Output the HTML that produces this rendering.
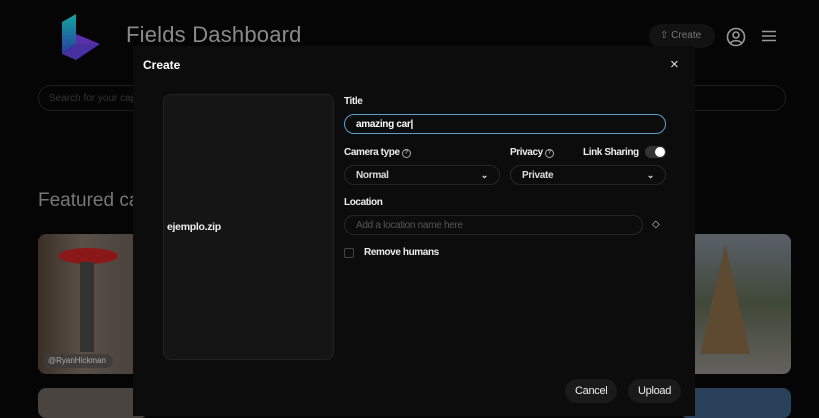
<!DOCTYPE html>
<html><head><style>
*{margin:0;padding:0;box-sizing:border-box}
body{width:819px;height:410px;overflow:hidden;background:#050505;font-family:"Liberation Sans",sans-serif;position:relative;color:#fff}
.a{position:absolute}
.title{left:126px;top:22px;font-size:22px;color:#8a8a8a;letter-spacing:0.2px}
.feat{left:38px;top:190px;font-size:19px;color:#777}
.search{left:38px;top:85px;width:748px;height:26px;border:1px solid #1c1c1c;border-radius:14px;font-size:10px;color:#333;padding:7px 10px}
.modal{left:133px;top:46px;width:562px;height:370px;background:#0c0c0c}
.lbl{font-size:10px;font-weight:bold;color:#eee;letter-spacing:-0.4px}
.inp{border:1px solid #262626;border-radius:11px;height:20px;font-size:10px;font-weight:bold;color:#ddd;padding:4px 11px;letter-spacing:-0.3px}
.btn{background:#1a1a1a;border-radius:12px;height:24px;font-size:11px;color:#eee;padding:6px 10px;letter-spacing:-0.3px}
.q{display:inline-block;width:9px;height:9px;border:1px solid #aaa;border-radius:50%;font-size:6px;text-align:center;line-height:7px;vertical-align:1px;margin-left:2px;font-weight:normal;letter-spacing:0}
</style></head><body>
<svg class="a" style="left:60px;top:14px" width="42" height="46" viewBox="0 0 42 46"><defs><linearGradient id="g" x1="0" y1="0" x2="0" y2="1"><stop offset="0" stop-color="#0fa8a0"/><stop offset="1" stop-color="#2a3aa0"/></linearGradient></defs><path d="M2 8 L16 0 L16 30 L2 40Z" fill="url(#g)"/><path d="M16 30 L28 34 L40 30 L16 20Z" fill="#5a2fa8"/><path d="M2 40 L16 30 L40 30 L16 46Z" fill="#4830a0"/></svg>
<div class="a title">Fields Dashboard</div>
<div class="a" style="left:649px;top:24px;width:66px;height:24px;border-radius:12px;background:#121212;font-size:10px;color:#777;padding:6px 0 0 11px">⇧ Create</div>
<svg class="a" style="left:726px;top:27px" width="20" height="20" viewBox="0 0 20 20" fill="none" stroke="#999" stroke-width="1.6"><circle cx="10" cy="10" r="8.5"/><circle cx="10" cy="8" r="3"/><path d="M4.5 16c2-3 9-3 11 0"/></svg>
<svg class="a" style="left:762px;top:30px" width="14" height="12" stroke="#999" stroke-width="1.5"><path d="M0 1.5h14M0 6h14M0 10.5h14"/></svg>
<div class="a search">Search for your captures</div>
<div class="a feat">Featured captures</div>
<div class="a" style="left:38px;top:234px;width:110px;height:140px;border-radius:8px;background:linear-gradient(90deg,#3a3028,#5a5048 40%,#463e38);overflow:hidden"><div class="a" style="left:20px;top:14px;width:60px;height:16px;background:#8a1818;border-radius:50%"></div><div class="a" style="left:42px;top:28px;width:14px;height:90px;background:#333"></div><div class="a" style="left:5px;top:120px;width:70px;height:14px;border-radius:7px;background:rgba(60,60,60,.8);font-size:8px;color:#aaa;padding:2px 5px">@RyanHickman</div></div>
<div class="a" style="left:38px;top:388px;width:110px;height:30px;border-radius:8px;background:#4a4440"></div>
<div class="a" style="left:680px;top:234px;width:111px;height:140px;border-radius:8px;background:linear-gradient(180deg,#5a6068,#404838 50%,#64625e)"><div class="a" style="left:20px;top:10px;width:50px;height:110px;background:#5e4a30;clip-path:polygon(50% 0,100% 100%,0 100%)"></div></div>
<div class="a" style="left:680px;top:388px;width:111px;height:30px;border-radius:8px;background:#2a4058"></div>
<div class="a modal">
<div class="a" style="left:10px;top:12px;font-size:12px;font-weight:bold">Create</div>
<div class="a" style="left:537px;top:10px;font-size:15px;color:#ddd">×</div>
<div class="a" style="left:30px;top:48px;width:171px;height:266px;background:#151515;border:1px solid #222;border-radius:8px"><div class="a" style="left:3px;top:126px;font-size:10.5px;font-weight:bold;color:#eee;letter-spacing:-0.3px">ejemplo.zip</div></div>
<div class="a lbl" style="left:211px;top:50px">Title</div>
<div class="a inp" style="left:211px;top:68px;width:322px;border:1.5px solid #5aa0d0;color:#fff">amazing car|</div>
<div class="a lbl" style="left:211px;top:101px">Camera type<span class="q">?</span></div>
<div class="a lbl" style="left:377px;top:101px">Privacy<span class="q">?</span></div>
<div class="a lbl" style="left:450px;top:101px">Link Sharing</div>
<div class="a" style="left:512px;top:100px;width:21px;height:12px;border-radius:6px;background:#333"><div class="a" style="left:10px;top:1px;width:10px;height:10px;border-radius:50%;background:#fff"></div></div>
<div class="a inp" style="left:211px;top:119px;width:156px">Normal<span style="float:right;font-size:9px">⌄</span></div>
<div class="a inp" style="left:377px;top:119px;width:156px">Private<span style="float:right;font-size:9px">⌄</span></div>
<div class="a lbl" style="left:211px;top:151px">Location</div>
<div class="a inp" style="left:211px;top:169px;width:299px;font-weight:normal;color:#555">Add a location name here</div>
<div class="a" style="left:519px;top:173px;font-size:10px;color:#ccc">◇</div>
<div class="a" style="left:211px;top:202px;width:10px;height:10px;border:1px solid #444;border-radius:2px"></div>
<div class="a lbl" style="left:231px;top:201px">Remove humans</div>
<div class="a btn" style="left:432px;top:333px">Cancel</div>
<div class="a btn" style="left:495px;top:333px">Upload</div>
</div>
</body></html>
